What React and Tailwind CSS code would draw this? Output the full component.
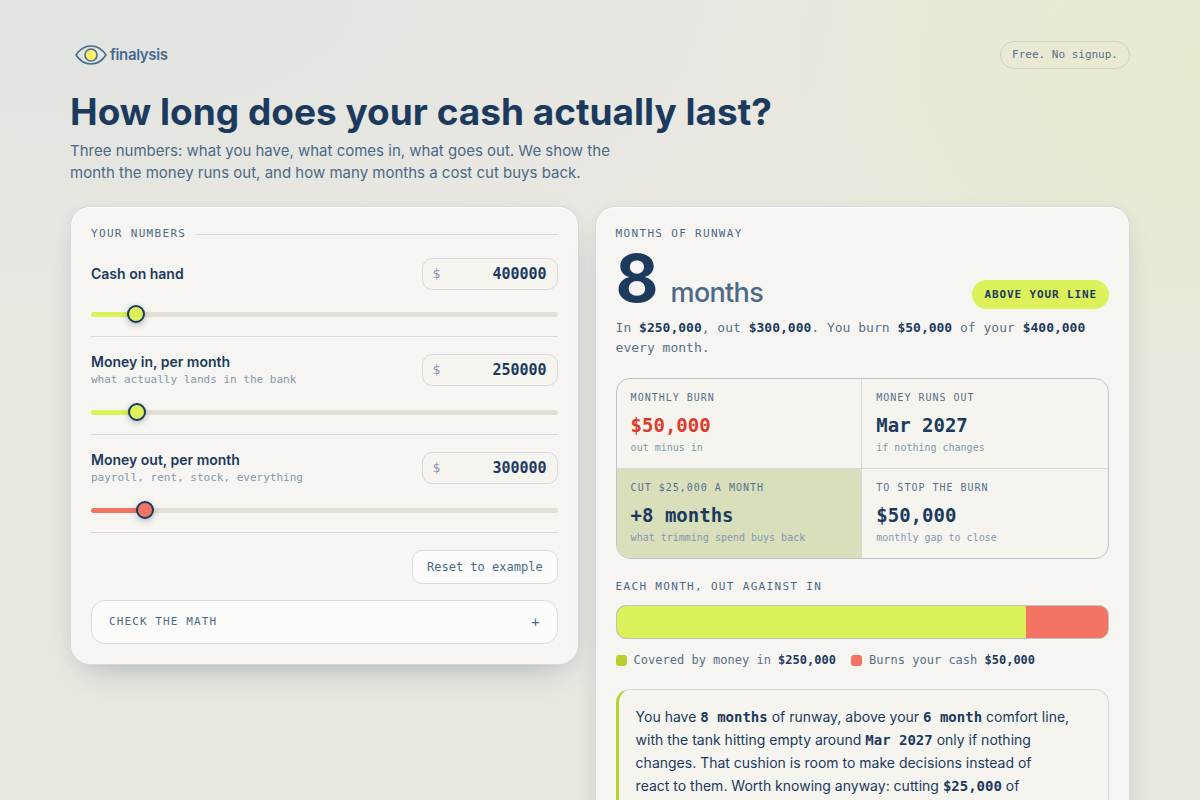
import React, { useState } from 'react';

const EXAMPLE = { cash: 400000, moneyIn: 250000, moneyOut: 300000 };
const CUT = 25000;
const COMFORT_MONTHS = 6;

const money = (n) => '$' + n.toLocaleString('en-US');

const MONO = "font-['DejaVu_Sans_Mono',monospace]";

function Logo() {
  return (
    <a href="#" className="flex items-center gap-[2px] pl-1 text-[#466a90]">
      <svg width="34" height="22" viewBox="0 0 34 22" fill="none" aria-hidden="true">
        <path
          d="M2 11C6 5 11 2 17 2s11 3 15 9c-4 6-9 9-15 9S6 17 2 11Z"
          stroke="currentColor"
          strokeWidth="1.6"
          strokeLinejoin="round"
        />
        <circle cx="17" cy="11" r="6" fill="#fbf367" stroke="currentColor" strokeWidth="1.6" />
      </svg>
      <span className="text-[15px] leading-5 font-semibold tracking-tight">finalysis</span>
    </a>
  );
}

function MoneyField({ id, label, hint, value, max, color, thumb, onChange }) {
  const share = Math.min(value / max, 1);
  // the thumb is 18px wide, so its centre runs from 9px to 100% - 9px
  const stop = `calc(9px + (100% - 18px) * ${share})`;

  return (
    <div className="border-b border-[#d5d9de] pt-[15px] pb-[13px]">
      <div className="flex items-center justify-between gap-4">
        <div>
          <label htmlFor={id} className="block text-sm leading-5 font-semibold text-[#1b3a5e]">{label}</label>
          {hint && <p className={`${MONO} text-[11px] leading-4 text-[#8398ad]`}>{hint}</p>}
        </div>
        <div className="flex h-8 w-[136px] shrink-0 items-center rounded-[10px] border border-[#d5d9de] bg-[#f5f4ee] px-[10px]">
          <span className={`${MONO} text-[13px] text-[#8398ad]`}>$</span>
          <input
            id={id}
            type="text"
            inputMode="numeric"
            value={value}
            onChange={(e) => onChange(Number(e.target.value.replace(/\D/g, '')))}
            className={`${MONO} w-full min-w-0 bg-transparent text-right text-[15px] leading-5 font-bold text-[#1b3a5e] outline-none`}
          />
        </div>
      </div>
      <div className="mt-[15px] flex h-[18px] items-center">
        <input
          type="range"
          min="0"
          max={max}
          step="1000"
          value={value}
          aria-label={label}
          onChange={(e) => onChange(Number(e.target.value))}
          style={{ background: `linear-gradient(to right, ${color} ${stop}, #e4dfd6 ${stop})` }}
          className={`h-[5px] w-full cursor-pointer appearance-none rounded-full outline-none [&::-webkit-slider-thumb]:h-[18px] [&::-webkit-slider-thumb]:w-[18px] [&::-webkit-slider-thumb]:appearance-none [&::-webkit-slider-thumb]:rounded-full [&::-webkit-slider-thumb]:border-2 [&::-webkit-slider-thumb]:border-[#1b3a5e] [&::-webkit-slider-thumb]:shadow-[0_2px_6px_rgba(27,58,94,0.3)] ${thumb}`}
        />
      </div>
    </div>
  );
}

function Stat({ label, value, note, className = '', valueClass = 'text-[#1b3a5e]' }) {
  return (
    <div className={`px-[14px] pt-3 pb-[13px] ${className}`}>
      <p className="text-[10px] leading-[14px] tracking-widest text-[#56718c] uppercase">{label}</p>
      <p className={`mt-2 text-[19px] leading-6 font-bold ${valueClass}`}>{value}</p>
      <p className="mt-1 text-[10px] leading-[14px] text-[#8398ad]">{note}</p>
    </div>
  );
}

const CARD =
  'rounded-[20px] border border-[#d5d9de] bg-[#f6f5f1] p-5 shadow-[inset_0_1px_0_#ffffff,0_2px_16px_rgba(27,58,94,0.05),0_18px_36px_-16px_rgba(27,58,94,0.28)]';

export default function App() {
  const [values, setValues] = useState(EXAMPLE);
  const [showMath, setShowMath] = useState(false);
  const set = (key) => (n) => setValues((v) => ({ ...v, [key]: n }));

  const { cash, moneyIn, moneyOut } = values;
  const burn = Math.max(moneyOut - moneyIn, 0);
  const months = burn ? Math.floor(cash / burn) : 0;
  const gained = burn > CUT ? Math.floor(cash / (burn - CUT)) - months : 0;
  const covered = moneyOut ? Math.min(moneyIn / moneyOut, 1) * 100 : 100;
  const empty = new Date(2026, 6 + months, 1).toLocaleDateString('en-US', { month: 'short', year: 'numeric' });

  return (
    <div className="min-h-screen bg-[#ebe8e1] bg-[radial-gradient(480px_380px_at_100%_8%,rgba(226,238,150,0.26),transparent),radial-gradient(800px_360px_at_8%_0%,rgba(195,215,225,0.24),transparent)] font-['Inter',sans-serif] text-[#1b3a5e]">
      <div className="mx-auto max-w-[1100px] px-5 pt-[41px]">
        <header className="flex items-center justify-between">
          <Logo />
          <span className={`${MONO} rounded-full border border-[#cdd1ca] px-[11px] py-[5px] text-[11px] leading-4 text-[#56718c]`}>
            Free. No signup.
          </span>
        </header>

        <h1 className="mt-[21px] text-[37px] leading-[44px] font-bold">How long does your cash actually last?</h1>
        <p className="mt-[6px] max-w-[560px] text-[15px] leading-[22px] text-[#4b6a88]">
          Three numbers: what you have, what comes in, what goes out. We show the month the money runs out, and how many months a cost cut buys back.
        </p>

        <main className="mt-[22px] grid grid-cols-[19fr_20fr] items-start gap-4">
          <section className={CARD}>
            <div className="mb-[2px] flex items-center gap-[10px]">
              <h2 className={`${MONO} text-[11px] leading-[14px] tracking-[0.12em] text-[#4b6a88] uppercase`}>Your numbers</h2>
              <span className="h-px flex-1 bg-[#d5d9de]" />
            </div>

            <MoneyField
              id="cash"
              label="Cash on hand"
              value={cash}
              max={5000000}
              color="#dcf15a"
              thumb="[&::-webkit-slider-thumb]:bg-[#dcf15a]"
              onChange={set('cash')}
            />
            <MoneyField
              id="money-in"
              label="Money in, per month"
              hint="what actually lands in the bank"
              value={moneyIn}
              max={3000000}
              color="#dcf15a"
              thumb="[&::-webkit-slider-thumb]:bg-[#dcf15a]"
              onChange={set('moneyIn')}
            />
            <MoneyField
              id="money-out"
              label="Money out, per month"
              hint="payroll, rent, stock, everything"
              value={moneyOut}
              max={3000000}
              color="#f47463"
              thumb="[&::-webkit-slider-thumb]:bg-[#f47463]"
              onChange={set('moneyOut')}
            />

            <div className="mt-[17px] flex justify-end">
              <button
                type="button"
                onClick={() => setValues(EXAMPLE)}
                className={`${MONO} h-[34px] rounded-[10px] border border-[#d9dde2] bg-[#fcfcfa] px-[14px] text-xs text-[#4b6a88]`}
              >
                Reset to example
              </button>
            </div>

            <div className={`${MONO} mt-4 rounded-[14px] border border-[#d9dde2] bg-[#fcfcfa] text-[#4b6a88]`}>
              <button
                type="button"
                aria-expanded={showMath}
                onClick={() => setShowMath(!showMath)}
                className="flex h-[42px] w-full items-center justify-between px-[17px]"
              >
                <span className="text-[11px] tracking-widest uppercase">Check the math</span>
                <span className="text-sm">{showMath ? '−' : '+'}</span>
              </button>
              {showMath && (
                <p className="px-[17px] pb-4 text-xs">
                  {money(cash)} / ({money(moneyOut)} - {money(moneyIn)}) = {months} months
                </p>
              )}
            </div>
          </section>

          <section className={CARD}>
            <h2 className={`${MONO} text-[11px] leading-[14px] tracking-[0.12em] text-[#4b6a88] uppercase`}>Months of runway</h2>
            <div className="mt-[7px] flex items-end justify-between">
              <p className="flex items-baseline gap-3 font-bold">
                <span className="text-[66px] leading-[60px]">{months}</span>
                <span className="text-[27px] leading-8 font-medium tracking-tight text-[#4b6a88]">months</span>
              </p>
              <span className={`${MONO} rounded-full bg-[#dcf15a] px-3 py-[6px] text-[11px] leading-[17px] font-bold tracking-[0.08em] uppercase`}>
                {months >= COMFORT_MONTHS ? 'Above your line' : 'Below your line'}
              </span>
            </div>
            <p className={`${MONO} mt-[9px] text-[13px] leading-5 text-[#56718c] [&>b]:text-[#1b3a5e]`}>
              In <b>{money(moneyIn)}</b>, out <b>{money(moneyOut)}</b>. You burn <b>{money(burn)}</b> of your <b>{money(cash)}</b> every month.
            </p>

            <div className={`${MONO} mt-5 grid grid-cols-2 overflow-hidden rounded-[14px] border border-[#b9c3cf] bg-[#f5f4ef]`}>
              <Stat
                label="Monthly burn"
                value={money(burn)}
                note="out minus in"
                className="border-r border-b border-[#d5d9de]"
                valueClass="text-[#dd3b2c]"
              />
              <Stat label="Money runs out" value={empty} note="if nothing changes" className="border-b border-[#d5d9de]" />
              <Stat
                label={`Cut ${money(CUT)} a month`}
                value={`+${gained} months`}
                note="what trimming spend buys back"
                className="border-r border-[#d5d9de] bg-[#d8dfba]"
              />
              <Stat label="To stop the burn" value={money(burn)} note="monthly gap to close" />
            </div>

            <h3 className={`${MONO} mt-[21px] text-[11px] leading-[14px] tracking-[0.12em] text-[#4b6a88] uppercase`}>Each month, out against in</h3>
            <div className="mt-[11px] flex h-[34px] overflow-hidden rounded-[10px] border border-[#bcc4c8] bg-[#f47463]">
              <div className="bg-[#dcf15a]" style={{ width: `${covered}%` }} />
            </div>
            <ul className={`${MONO} mt-[13px] flex flex-wrap gap-x-[15px] text-xs leading-4 text-[#56718c] [&_b]:text-[#1b3a5e]`}>
              <li className="flex items-center gap-[7px]">
                <span className="h-[11px] w-[11px] rounded-[3px] bg-[#bacf2e]" />
                <span>Covered by money in <b>{money(moneyIn)}</b></span>
              </li>
              <li className="flex items-center gap-[7px]">
                <span className="h-[11px] w-[11px] rounded-[3px] bg-[#f47463]" />
                <span>Burns your cash <b>{money(burn)}</b></span>
              </li>
            </ul>

            <p className="mt-[21px] rounded-[14px] border border-l-[3px] border-[#d5d9de] border-l-[#bacf2e] bg-[#f5f4ef] py-[15px] pr-4 pl-[17px] text-sm leading-[23px] [&>b]:font-['DejaVu_Sans_Mono',monospace] [&>b]:leading-none">
              You have <b>{months} months</b> of runway, above your <b>{COMFORT_MONTHS} month</b> comfort line, with the tank hitting empty around <b>{empty}</b> only if nothing changes. That cushion is room to make decisions instead of
              <br />
              react to them. Worth knowing anyway: cutting <b>{money(CUT)}</b> of
            </p>
          </section>
        </main>
      </div>
    </div>
  );
}
